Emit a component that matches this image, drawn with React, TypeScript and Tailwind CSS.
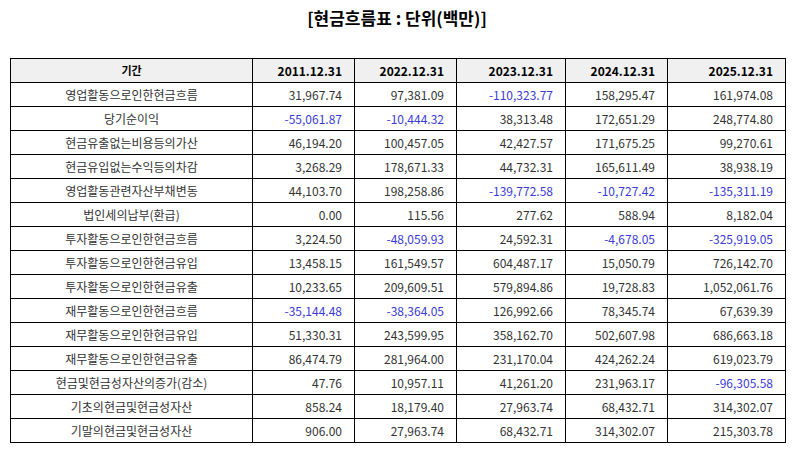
const years = ["2011.12.31", "2022.12.31", "2023.12.31", "2024.12.31", "2025.12.31"];

const rows: { label: string; values: string[] }[] = [
  { label: "영업활동으로인한현금흐름", values: ["31,967.74", "97,381.09", "-110,323.77", "158,295.47", "161,974.08"] },
  { label: "당기순이익", values: ["-55,061.87", "-10,444.32", "38,313.48", "172,651.29", "248,774.80"] },
  { label: "현금유출없는비용등의가산", values: ["46,194.20", "100,457.05", "42,427.57", "171,675.25", "99,270.61"] },
  { label: "현금유입없는수익등의차감", values: ["3,268.29", "178,671.33", "44,732.31", "165,611.49", "38,938.19"] },
  { label: "영업활동관련자산부채변동", values: ["44,103.70", "198,258.86", "-139,772.58", "-10,727.42", "-135,311.19"] },
  { label: "법인세의납부(환급)", values: ["0.00", "115.56", "277.62", "588.94", "8,182.04"] },
  { label: "투자활동으로인한현금흐름", values: ["3,224.50", "-48,059.93", "24,592.31", "-4,678.05", "-325,919.05"] },
  { label: "투자활동으로인한현금유입", values: ["13,458.15", "161,549.57", "604,487.17", "15,050.79", "726,142.70"] },
  { label: "투자활동으로인한현금유출", values: ["10,233.65", "209,609.51", "579,894.86", "19,728.83", "1,052,061.76"] },
  { label: "재무활동으로인한현금흐름", values: ["-35,144.48", "-38,364.05", "126,992.66", "78,345.74", "67,639.39"] },
  { label: "재무활동으로인한현금유입", values: ["51,330.31", "243,599.95", "358,162.70", "502,607.98", "686,663.18"] },
  { label: "재무활동으로인한현금유출", values: ["86,474.79", "281,964.00", "231,170.04", "424,262.24", "619,023.79"] },
  { label: "현금및현금성자산의증가(감소)", values: ["47.76", "10,957.11", "41,261.20", "231,963.17", "-96,305.58"] },
  { label: "기초의현금및현금성자산", values: ["858.24", "18,179.40", "27,963.74", "68,432.71", "314,302.07"] },
  { label: "기말의현금및현금성자산", values: ["906.00", "27,963.74", "68,432.71", "314,302.07", "215,303.78"] },
];

const colWidths = ["w-[242px]", "w-[102px]", "w-[102px]", "w-[109px]", "w-[102px]", "w-[118px]"];

export default function App() {
  return (
    <div className="w-[794px] h-[452px] bg-white pt-[6px] font-['Noto_Sans_CJK_KR','Noto_Sans',sans-serif]">
      <h1 className="text-center text-[17px] leading-[24px] font-bold text-black">
        [현금흐름표 : 단위(백만)]
      </h1>
      <table className="mt-[28px] ml-[10px] w-[776px] table-fixed border-collapse border border-black text-[12px]">
        <colgroup>
          {colWidths.map((w, i) => (
            <col key={i} className={w} />
          ))}
        </colgroup>
        <thead>
          <tr className="bg-[#f0f0f0]">
            <th className="h-[24px] p-0 border border-black text-center font-bold text-[11px] text-black">
              기간
            </th>
            {years.map((y) => (
              <th
                key={y}
                className="h-[24px] p-0 pr-[12px] border border-black text-right font-bold text-black"
              >
                {y}
              </th>
            ))}
          </tr>
        </thead>
        <tbody>
          {rows.map((row) => (
            <tr key={row.label}>
              <td className="h-[24px] p-0 border border-black text-center text-[#333]">
                {row.label}
              </td>
              {row.values.map((v, i) => (
                <td
                  key={i}
                  className={`h-[24px] p-0 pr-[12px] border border-black text-right ${
                    v.startsWith("-") ? "text-[#3a3ad8]" : "text-[#333]"
                  }`}
                >
                  {v}
                </td>
              ))}
            </tr>
          ))}
        </tbody>
      </table>
    </div>
  );
}
